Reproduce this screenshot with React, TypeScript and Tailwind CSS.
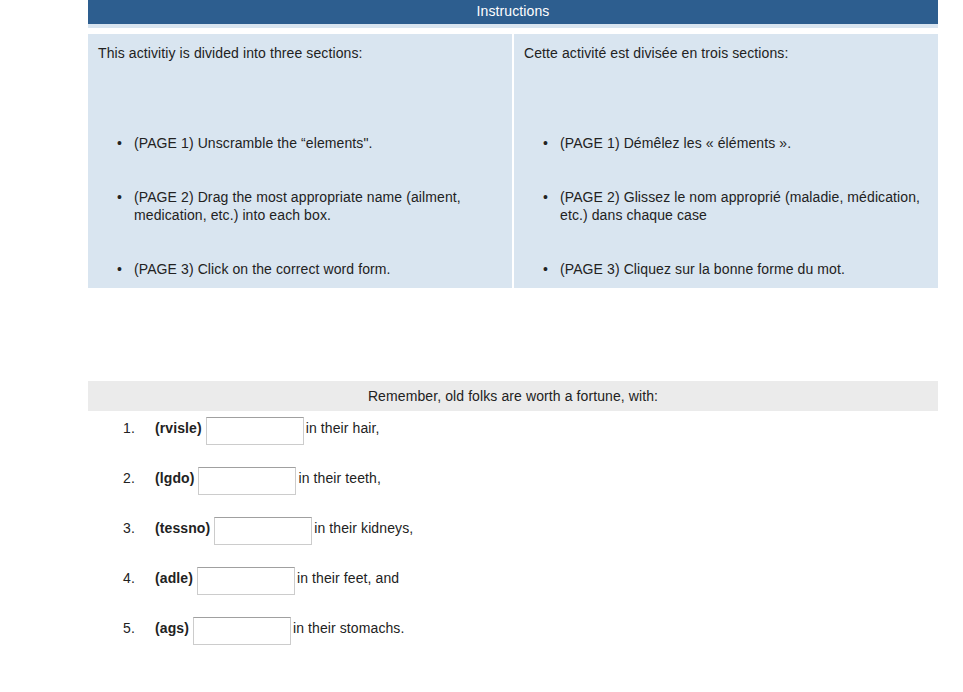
import React from 'react';

const english = [
  ['(PAGE 1) Unscramble the \u201celements".'],
  ['(PAGE 2) Drag the most appropriate name (ailment,', 'medication, etc.) into each box.'],
  ['(PAGE 3) Click on the correct word form.'],
];

const french = [
  ['(PAGE 1) D\u00e9m\u00ealez les \u00ab \u00e9l\u00e9ments \u00bb.'],
  ['(PAGE 2) Glissez le nom appropri\u00e9 (maladie, m\u00e9dication,', 'etc.) dans chaque case'],
  ['(PAGE 3) Cliquez sur la bonne forme du mot.'],
];

const rows = [
  { n: '1.', word: '(rvisle)', rest: 'in their hair,' },
  { n: '2.', word: '(lgdo)', rest: 'in their teeth,' },
  { n: '3.', word: '(tessno)', rest: 'in their kidneys,' },
  { n: '4.', word: '(adle)', rest: 'in their feet, and' },
  { n: '5.', word: '(ags)', rest: 'in their stomachs.' },
];

const Column = ({ intro, items }: { intro: string; items: string[][] }) => (
  <div className="flex-1 bg-[#d9e5f0] px-[10px] py-[10px]">
    <p>{intro}</p>
    <ul className="mt-[72px] flex flex-col gap-[36px]">
      {items.map((lines, i) => (
        <li key={i} className="flex">
          <span className="w-[36px] shrink-0 pl-[19px]">•</span>
          <span>
            {lines.map((l, j) => (
              <span key={j} className="block whitespace-nowrap">{l}</span>
            ))}
          </span>
        </li>
      ))}
    </ul>
  </div>
);

export default function App() {
  return (
    <div className="min-h-[692px] bg-white text-[14px] leading-[18px] tracking-[0.1px] text-[#222] font-['Liberation_Sans',Arial,sans-serif]">
      <div className="ml-[88px] w-[850px]">
        <div className="h-[28px] bg-[#2d5e8f] border-b-4 border-[#d9e5f0] text-center text-white leading-[23px]">
          Instructions
        </div>

        <div className="mt-[6px] flex gap-[2px]">
          <Column intro="This activitiy is divided into three sections:" items={english} />
          <Column intro="Cette activité est divisée en trois sections:" items={french} />
        </div>

        <div className="mt-[93px] h-[30px] bg-[#ebebeb] text-center leading-[30px]">
          Remember, old folks are worth a fortune, with:
        </div>

        <div className="mt-[6px] flex flex-col gap-[22px]">
          {rows.map((r) => (
            <div key={r.n} className="flex h-[28px] items-start leading-[22px]">
              <span className="w-[67px] shrink-0 pl-[35px]">{r.n}</span>
              <b className="font-bold">{r.word}</b>
              <input
                type="text"
                className="ml-[4px] h-[28px] w-[98px] border border-[#cccccc] border-t-[#a0a0a0] bg-white px-1 text-[14px] outline-none"
              />
              <span className="ml-[2px]">{r.rest}</span>
            </div>
          ))}
        </div>
      </div>
    </div>
  );
}
